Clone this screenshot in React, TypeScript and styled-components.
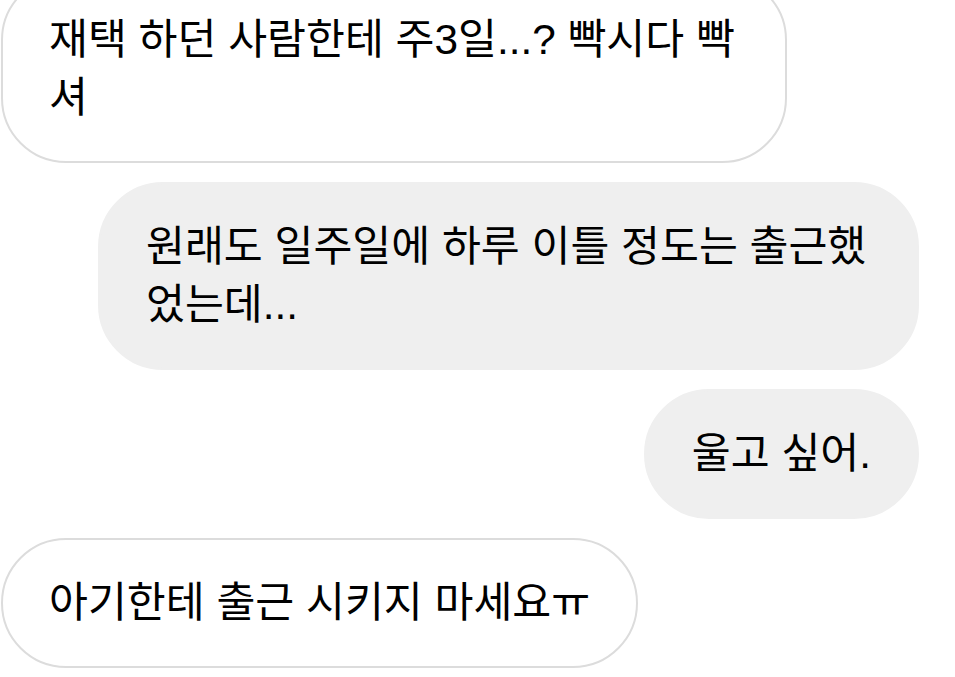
import styled, { createGlobalStyle } from 'styled-components';

const GlobalStyle = createGlobalStyle`
	html, body {
		margin: 0;
		padding: 0;
		background: #fff;
		overflow: hidden;
	}
`;

type Message = { id: number; text: string; mine: boolean; maxWidth?: number };

const messages: Message[] = [
	{ id: 1, text: '재택 하던 사람한테 주3일...? 빡시다 빡셔', mine: false, maxWidth: 786 },
	{ id: 2, text: '원래도 일주일에 하루 이틀 정도는 출근했었는데...', mine: true, maxWidth: 821 },
	{ id: 3, text: '울고 싶어.', mine: true },
	{ id: 4, text: '아기한테 출근 시키지 마세요ㅠ', mine: false },
];

const App = () => {
	return (
		<>
			<GlobalStyle />
			<Chat>
				{messages.map((msg) => (
					<Row key={msg.id} $mine={msg.mine}>
						<Bubble $mine={msg.mine} $maxWidth={msg.maxWidth}>
							{msg.text}
						</Bubble>
					</Row>
				))}
			</Chat>
		</>
	);
};

export default App;

const Chat = styled.div`
	display: flex;
	flex-direction: column;
	gap: 19px;
	width: 955px;
	box-sizing: border-box;
	padding: 0 36px 0 1px;
	margin-top: -25px;
	font-family: 'Liberation Sans', 'Noto Sans CJK KR', sans-serif;
`;

interface RowProps {
	$mine: boolean;
}

const Row = styled.div<RowProps>`
	display: flex;
	flex-shrink: 0;
	justify-content: ${(props) => (props.$mine ? 'flex-end' : 'flex-start')};
`;

interface BubbleProps {
	$mine: boolean;
	$maxWidth?: number;
}

const Bubble = styled.div<BubbleProps>`
	box-sizing: border-box;
	max-width: ${(props) => props.$maxWidth ?? 819}px;
	padding: 34px 46px;
	border-radius: 65px;
	font-size: 42.3px;
	line-height: 58px;
	color: #000;
	${(props) =>
		props.$mine
			? 'background-color: #efefef; border: 2px solid #efefef;'
			: 'background-color: #fff; border: 2px solid #dcdcdc;'}
`;
